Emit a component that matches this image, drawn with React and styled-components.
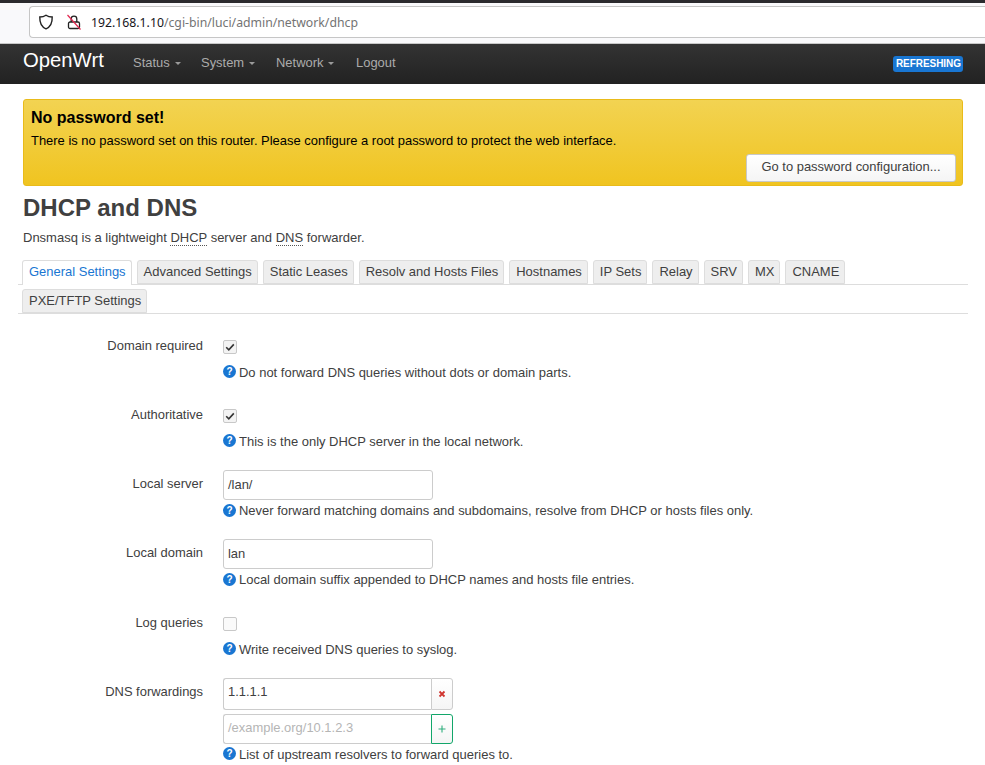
import React from 'react'
import styled, { createGlobalStyle } from 'styled-components'

const GlobalStyle = createGlobalStyle`
  html, body {
    margin: 0;
    padding: 0;
    background: #fff;
    overflow: hidden;
  }
  body {
    font-family: "Liberation Sans", Arial, sans-serif;
    font-size: 12.95px;
    color: #404040;
  }
  * {
    box-sizing: border-box;
  }
`

const Page = styled.div`
  width: 985px;
  height: 765px;
  overflow: hidden;
`

const BrowserBar = styled.div`
  display: flex;
  align-items: center;
  height: 44px;
  padding: 0 0 2px 29px;
  background: #f9f9fb;
  border-top: 3px solid #2b2a2e;
  border-bottom: 1px solid #c8c8c8;
`

const UrlBox = styled.div`
  display: flex;
  align-items: center;
  flex: 1;
  height: 32px;
  padding-left: 8px;
  background: #fff;
  border: 1px solid #c6c6c6;
  border-right: none;
  border-radius: 4px 0 0 4px;
`

const UrlIcon = styled.svg`
  flex: none;
  width: 16px;
  height: 16px;
  margin-right: ${props => props.$gap}px;
`

const UrlText = styled.span`
  font-family: "Noto Sans", sans-serif;
  font-size: 12.25px;
  color: #737373;
  b {
    font-weight: 400;
    color: #15141a;
  }
`

const Navbar = styled.header`
  display: flex;
  align-items: center;
  height: 40px;
  padding: 0 22px 0 23px;
  background: linear-gradient(#333, #222);
`

const Brand = styled.a`
  width: 110px;
  margin-top: -8px;
  font-size: 20.3px;
  color: #fff;
`

const NavItem = styled.a`
  display: flex;
  align-items: center;
  width: ${props => props.$w}px;
  margin-top: -3px;
  color: #ababab;
  font-size: 12.95px;
  &::after {
    content: '';
    display: ${props => props.$plain ? 'none' : 'block'};
    margin: 2px 0 0 5px;
    border-top: 3.5px solid #9a9a9a;
    border-left: 3.5px solid transparent;
    border-right: 3.5px solid transparent;
  }
`

const Badge = styled.span`
  margin-left: auto;
  padding: 2px 2px 2px 3px;
  background: #1976d2;
  border-radius: 3px;
  color: #fff;
  font-size: 10px;
  line-height: 12px;
  letter-spacing: -0.05px;
  font-weight: 700;
`

const Main = styled.main`
  padding: 15px 22px 0 23px;
`

const Alert = styled.div`
  position: relative;
  height: 87px;
  padding: 8px 7px;
  background: linear-gradient(#f2d352, #f0c420);
  border: 1px solid #e9bb1a;
  border-radius: 3px;
  color: #000;
`

const AlertTitle = styled.h4`
  margin: 0;
  font-size: 16px;
  line-height: 20px;
  font-weight: 700;
`

const AlertText = styled.p`
  margin: 3px 0 0;
  font-size: 12.95px;
  line-height: 20px;
`

const AlertButton = styled.button`
  position: absolute;
  right: 6px;
  bottom: 3px;
  width: 210px;
  height: 28px;
  padding: 0 0 3px;
  background: linear-gradient(#fff, #f5f5f5);
  border: 1px solid #c8c8c8;
  border-radius: 3px;
  color: #404040;
  font: 12.95px "Liberation Sans", Arial, sans-serif;
`

const Title = styled.h2`
  margin: 8px 0 0;
  font-size: 24px;
  line-height: 28px;
  font-weight: 700;
  color: #404040;
`

const Lead = styled.p`
  margin: 7px 0 0;
  font-size: 13px;
  line-height: 18px;
  color: #404040;
`

const Abbr = styled.abbr`
  text-decoration: none;
  border-bottom: 1px dotted #555;
`

const TabLine = styled.div`
  display: flex;
  gap: 5px;
  height: ${props => props.$height}px;
  margin: ${props => props.$top}px -5px 0 -5px;
  padding: ${props => props.$pad}px 0 0 4px;
  border-bottom: 1px solid #ddd;
`

const Tab = styled.a`
  display: block;
  height: ${props => props.$active ? 25 : 24}px;
  padding: 0 5px 0 6px;
  background: ${props => props.$active ? '#fff' : '#eee'};
  border: 1px solid #ddd;
  border-bottom: ${props => props.$active ? 'none' : '1px solid #ddd'};
  border-radius: 3px 3px 0 0;
  color: ${props => props.$active ? '#1976d2' : '#404040'};
  font-size: 12.98px;
  line-height: 21px;
`

const Form = styled.div`
  padding-top: 17.8px;
`

const Field = styled.div`
  display: grid;
  grid-template-columns: 180px 1fr;
  column-gap: 20px;
  height: 69.2px;
`

const FieldLabel = styled.label`
  text-align: right;
  font-size: 12.95px;
  line-height: 28px;
  color: #404040;
`

const FieldBody = styled.div`
  display: flex;
  flex-direction: column;
  align-items: flex-start;
`

const CheckRow = styled.div`
  display: flex;
  align-items: center;
  height: 30px;
`

const Check = styled.span`
  display: flex;
  align-items: center;
  justify-content: center;
  width: 14px;
  height: 14px;
  background: ${props => props.$on ? '#f3f3f3' : '#fafafa'};
  border: 1px solid #c8c8c8;
  border-radius: 2px;
`

const Input = styled.div`
  display: flex;
  align-items: center;
  width: ${props => props.$wide ? '208px' : '210px'};
  height: ${props => props.$h || 30}px;
  padding: 0 0 ${props => props.$h ? 4 : 2}px 4px;
  background: #fff;
  border: 1px solid #ccc;
  border-right: ${props => props.$wide ? 'none' : '1px solid #ccc'};
  border-radius: ${props => props.$wide ? '3px 0 0 3px' : '3px'};
  color: ${props => props.$placeholder ? '#b5b5b5' : '#404040'};
  font-size: 12.95px;
`

const InputGroup = styled.div`
  display: flex;
  margin-bottom: ${props => props.$gap || 0}px;
`

const GroupButton = styled.span`
  display: flex;
  align-items: center;
  justify-content: center;
  width: 22px;
  background: linear-gradient(#fff, #f5f5f5);
  border: 1px solid ${props => props.$add ? '#12a66a' : '#ccc'};
  border-radius: 0 3px 3px 0;
`

const Desc = styled.div`
  display: flex;
  align-items: center;
  height: 20px;
  font-size: 12.98px;
  color: #404040;
  span {
    padding-top: 1px;
  }
`

const HelpIcon = styled.i`
  display: flex;
  align-items: center;
  justify-content: center;
  width: 13px;
  height: 13px;
  margin-right: 3px;
  background: #1976d2;
  border-radius: 50%;
  color: #fff;
  font-size: 10px;
  font-style: normal;
  font-weight: 700;
`

const tabsOne = [
  'Advanced Settings', 'Static Leases', 'Resolv and Hosts Files', 'Hostnames',
  'IP Sets', 'Relay', 'SRV', 'MX', 'CNAME',
]

const CheckMark = () => (
  <svg width="10" height="10" viewBox="0 0 10 10">
    <path d="M1.2 5.2 L3.8 7.8 L8.8 2.4" fill="none" stroke="#333" strokeWidth="1.6" />
  </svg>
)

const Description = ({ children }) => (
  <Desc><HelpIcon>?</HelpIcon><span>{children}</span></Desc>
)

const CheckField = ({ label, on, children }) => (
  <Field>
    <FieldLabel>{label}</FieldLabel>
    <FieldBody>
      <CheckRow><Check $on={on}>{on && <CheckMark />}</Check></CheckRow>
      <Description>{children}</Description>
    </FieldBody>
  </Field>
)

const TextField = ({ label, value, children }) => (
  <Field>
    <FieldLabel>{label}</FieldLabel>
    <FieldBody>
      <Input>{value}</Input>
      <Description>{children}</Description>
    </FieldBody>
  </Field>
)

const App = () => (
  <Page>
    <GlobalStyle />
    <BrowserBar>
      <UrlBox>
        <UrlIcon $gap={12} viewBox="0 0 16 16">
          <path d="M8 1.2 C6 2.6 4 3 1.8 3 C1.6 9 3.6 13 8 14.8 C12.4 13 14.4 9 14.2 3 C12 3 10 2.6 8 1.2 Z" fill="none" stroke="#222" strokeWidth="1.4" />
        </UrlIcon>
        <UrlIcon $gap={9} viewBox="0 0 16 16">
          <path d="M5.2 8 V5 a2.8 2.8 0 0 1 5.6 0 V8" fill="none" stroke="#222" strokeWidth="1.3" />
          <rect x="2.5" y="8" width="11" height="6.5" rx="1.5" fill="none" stroke="#222" strokeWidth="1.3" />
          <path d="M1.5 1 L14.5 15.5" stroke="#e22850" strokeWidth="1.2" />
        </UrlIcon>
        <UrlText><b>192.168.1.10</b>/cgi-bin/luci/admin/network/dhcp</UrlText>
      </UrlBox>
    </BrowserBar>
    <Navbar>
      <Brand>OpenWrt</Brand>
      <NavItem $w={68}>Status</NavItem>
      <NavItem $w={75}>System</NavItem>
      <NavItem $w={80}>Network</NavItem>
      <NavItem $plain>Logout</NavItem>
      <Badge>REFRESHING</Badge>
    </Navbar>
    <Main>
      <Alert>
        <AlertTitle>No password set!</AlertTitle>
        <AlertText>There is no password set on this router. Please configure a root password to protect the web interface.</AlertText>
        <AlertButton>Go to password configuration...</AlertButton>
      </Alert>
      <Title>DHCP and DNS</Title>
      <Lead>Dnsmasq is a lightweight <Abbr>DHCP</Abbr> server and <Abbr>DNS</Abbr> forwarder.</Lead>
      <TabLine $height={25} $top={13} $pad={0}>
        <Tab $active>General Settings</Tab>
        {tabsOne.map(name => <Tab key={name}>{name}</Tab>)}
      </TabLine>
      <TabLine $height={29} $top={0} $pad={4}>
        <Tab>PXE/TFTP Settings</Tab>
      </TabLine>
      <Form>
        <CheckField label="Domain required" on>Do not forward DNS queries without dots or domain parts.</CheckField>
        <CheckField label="Authoritative" on>This is the only DHCP server in the local network.</CheckField>
        <TextField label="Local server" value="/lan/">Never forward matching domains and subdomains, resolve from DHCP or hosts files only.</TextField>
        <TextField label="Local domain" value="lan">Local domain suffix appended to DHCP names and hosts file entries.</TextField>
        <CheckField label="Log queries">Write received DNS queries to syslog.</CheckField>
        <Field>
          <FieldLabel>DNS forwardings</FieldLabel>
          <FieldBody>
            <InputGroup $gap={4}>
              <Input $wide $h={32}>1.1.1.1</Input>
              <GroupButton>
                <svg width="8" height="8" viewBox="0 0 8 8">
                  <path d="M1.5 1.5 L6.5 6.5 M6.5 1.5 L1.5 6.5" stroke="#d0352f" strokeWidth="1.8" />
                </svg>
              </GroupButton>
            </InputGroup>
            <InputGroup>
              <Input $wide $placeholder>/example.org/10.1.2.3</Input>
              <GroupButton $add>
                <svg width="8" height="8" viewBox="0 0 8 8">
                  <path d="M4 0.5 V7.5 M0.5 4 H7.5" stroke="#2fae7d" strokeWidth="1.1" />
                </svg>
              </GroupButton>
            </InputGroup>
            <Description>List of upstream resolvers to forward queries to.</Description>
          </FieldBody>
        </Field>
      </Form>
    </Main>
  </Page>
)

export default App
